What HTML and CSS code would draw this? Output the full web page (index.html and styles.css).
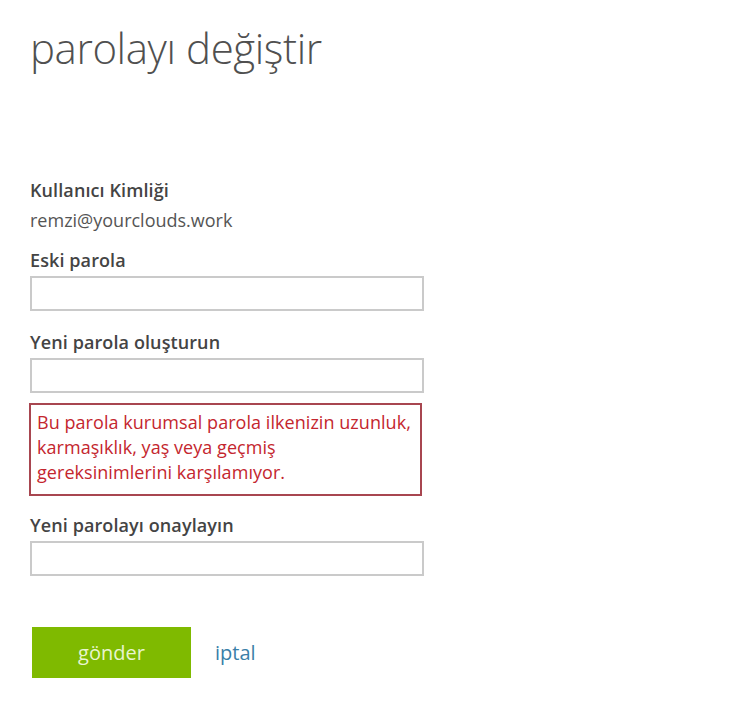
FILE: index.html
```html
<!doctype html>
<html>
<head>
<meta charset="utf-8">
<title>parolayı değiştir</title>
<link rel="stylesheet" href="styles.css">
</head>
<body>
<div class="wrap">
    <h1 class="title">parolayı değiştir</h1>
    <div class="form">
        <div class="label first">Kullanıcı Kimliği</div>
        <div class="value">remzi@yourclouds.work</div>

        <div class="label">Eski parola</div>
        <input class="txt" type="password">

        <div class="label">Yeni parola oluşturun</div>
        <input class="txt" type="password">
        <div class="error">Bu parola kurumsal parola ilkenizin uzunluk,<br>karmaşıklık, yaş veya geçmiş<br>gereksinimlerini karşılamıyor.</div>

        <div class="label">Yeni parolayı onaylayın</div>
        <input class="txt" type="password">

        <div class="btns">
            <a class="btn" href="javascript:;">gönder</a>
            <a class="cancel" href="javascript:;">iptal</a>
        </div>
    </div>
</div>
</body>
</html>
```
FILE: styles.css
```css
*{ margin:0; padding:0; box-sizing:border-box;}
body{ background:#fff; font-family:"Open Sans", "Liberation Sans", sans-serif; color:#444;}
a{ text-decoration:none;}
.wrap{ padding:24px 0 0 30px; width:730px;}
.title{ font-size:42px; font-weight:300; line-height:48px; color:#505050; letter-spacing:-0.4px;}
.form{ width:394px; margin-top:107px;}
.label{ font-size:18px; font-weight:600; line-height:22px; color:#444; margin-top:20px; letter-spacing:0.1px;}
.label.first{ margin-top:0;}
.value{ font-size:18px; line-height:22px; color:#555; margin-top:8px; margin-bottom:-2px;}
.txt{ display:block; width:394px; height:35px; border:2px solid #cacaca; margin-top:5px; background:#fff; outline:none;}
.error{ width:393px; margin:10px 0 -2px -1px; border:2px solid #a84650; padding:5px 6px 9px; font-size:18px; line-height:25px; color:#c4262e; letter-spacing:0.05px;}
.btns{ display:flex; align-items:center; margin-top:51px; padding-left:2px;}
.btn{ display:block; width:159px; height:51px; line-height:51px; background:#7fba00; color:#e8f5cf; font-size:20px; text-align:center;}
.cancel{ margin-left:24px; color:#3a7fa8; font-size:20px;}
```
